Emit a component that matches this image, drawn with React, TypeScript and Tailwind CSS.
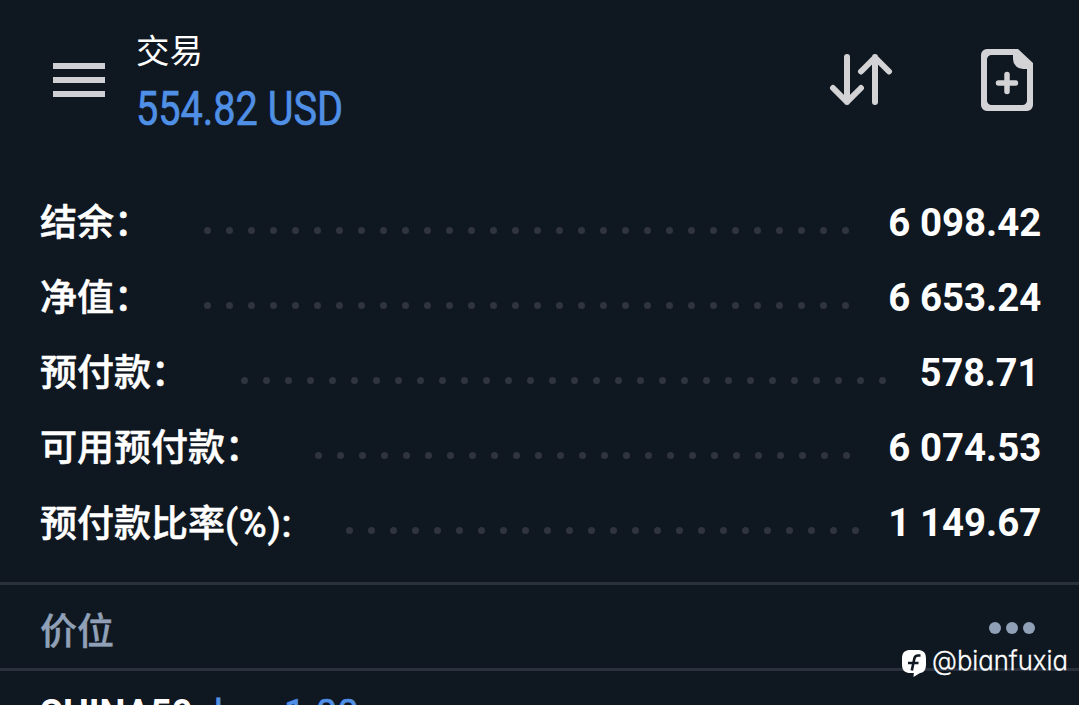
interface SummaryRow {
  label: string
  suffix?: string
  labelClass: string
  dots: number
  value: string
  valueClass?: string
}

const summaryRows: SummaryRow[] = [
  { label: '结余：', labelClass: 'w-[164px]', dots: 30, value: '6 098.42' },
  { label: '净值：', labelClass: 'w-[164px]', dots: 30, value: '6 653.24' },
  { label: '预付款：', labelClass: 'w-[201px]', dots: 30, value: '578.71', valueClass: 'pr-[2px] scale-x-[0.97]' },
  { label: '可用预付款：', labelClass: 'w-[275px]', dots: 25, value: '6 074.53' },
  { label: '预付款比率', suffix: '(%):', labelClass: 'w-[306px]', dots: 24, value: '1 149.67' },
]

function MenuIcon() {
  return (
    <svg width="52" height="36" viewBox="0 0 52 36" fill="#d0d0d4" aria-hidden="true">
      <rect y="0" width="52" height="6" />
      <rect y="14" width="52" height="6" />
      <rect y="28" width="52" height="6" />
    </svg>
  )
}

function SortIcon() {
  return (
    <svg
      width="64"
      height="54"
      viewBox="0 0 64 54"
      fill="none"
      stroke="#d3d3d5"
      strokeWidth="6"
      strokeLinecap="round"
      strokeLinejoin="round"
      aria-hidden="true"
    >
      <path d="M18 4v45M4 35l14 14 14-14" />
      <path d="M46 49V4M32 18.500l14-14 14 14" />
    </svg>
  )
}

function NewOrderIcon() {
  return (
    <svg width="52" height="64" viewBox="0 0 52 64" aria-hidden="true">
      <path
        fill="#d3d3d5"
        fillRule="evenodd"
        d="M6 1H37L52 15V57a6 6 0 0 1-6 6H6a6 6 0 0 1-6-6V7a6 6 0 0 1 6-6ZM10.500 7A4.500 4.500 0 0 0 6 11.500V52.500A4.500 4.500 0 0 0 10.500 57H41.500A4.500 4.500 0 0 0 46 52.500V21H42A10 10 0 0 1 32 11V7Z"
      />
      <path d="M26 26.500v17M17.500 35h17" fill="none" stroke="#d3d3d5" strokeWidth="5.500" strokeLinecap="round" />
    </svg>
  )
}

function Watermark() {
  return (
    <div className="absolute top-[646px] left-[902px] flex items-start">
      <svg width="24" height="32" viewBox="0 0 24 32" aria-hidden="true">
        <path
          fill="#fff"
          d="M9 4h6c6.500 0 9 2.500 9 9v5c0 6-2 8.500-6 9l-6.500 4 .3-4H9c-6.500 0-9-2.500-9-9v-5c0-6.500 2.500-9 9-9Z"
        />
        <path
          d="M18.500 9.500h-2.500c-2.200 0-3.200 1-3.700 3.200L9.800 24.500M6 17h10.500"
          fill="none"
          stroke="#0f1720"
          strokeWidth="2.600"
        />
      </svg>
      <span className="ml-[6px] origin-left scale-x-[0.95] font-[Inter,sans-serif] text-[27px] leading-[30px] font-light whitespace-nowrap text-white [-webkit-text-stroke:0.3px] [font-feature-settings:'cv11']">
        @bianfuxia
      </span>
    </div>
  )
}

export default function App() {
  return (
    <main className="relative flex h-[705px] w-[1079px] flex-col overflow-hidden bg-[#0f1720] font-[Roboto,'Noto_Sans_CJK_SC',sans-serif] text-white">
      <header className="flex h-[185px] shrink-0 items-start pr-[46px] pl-[53px]">
        <div className="pt-[63px]">
          <MenuIcon />
        </div>
        <div className="ml-[31px] flex flex-1 flex-col pt-[32px]">
          <span className="text-[33.500px] leading-[40px]">交易</span>
          <span className="mt-[12px] inline-block w-max origin-left scale-x-[0.835] text-[47.500px] leading-[50px] text-[#4f90e6] [-webkit-text-stroke:0.7px]">
            554.82 USD
          </span>
        </div>
        <div className="pt-[53px]">
          <SortIcon />
        </div>
        <div className="ml-[88px] pt-[48px]">
          <NewOrderIcon />
        </div>
      </header>

      <section className="flex h-[397px] shrink-0 flex-col pr-[38px] pl-[40px]">
        {summaryRows.map((row) => (
          <div key={row.label} className="flex h-[75px] shrink-0 items-center">
            <span
              className={`${row.labelClass} shrink-0 pt-[3px] text-[37px] leading-[50px] font-medium whitespace-nowrap [-webkit-text-stroke:0.5px]`}
            >
              {row.label}
              {row.suffix && <span className="text-[38px] tracking-[0.7px]">{row.suffix}</span>}
            </span>
            <div className="flex gap-[15px] pt-[16px]" aria-hidden="true">
              {Array.from({ length: row.dots }, (_, i) => (
                <i key={i} className="size-[7px] rounded-full bg-[#30343f]" />
              ))}
            </div>
            <span
              className={`ml-auto origin-right text-[39px] leading-[50px] font-bold whitespace-nowrap ${row.valueClass ?? 'scale-x-[0.985]'}`}
            >
              {row.value}
            </span>
          </div>
        ))}
      </section>

      <section className="flex h-[89px] shrink-0 items-center justify-between border-y-[3px] border-[#2b303d] pr-[44px] pl-[40px] text-[#8fa0b7]">
        <h2 className="pt-[12px] text-[37px] leading-[50px] font-medium [-webkit-text-stroke:0.4px]">价位</h2>
        <div className="flex gap-[5px] pt-[2px]">
          <i className="size-[12px] rounded-full bg-current" />
          <i className="size-[12px] rounded-full bg-current" />
          <i className="size-[12px] rounded-full bg-current" />
        </div>
      </section>

      <section className="flex shrink-0 items-start pt-[18px] pl-[39px] text-[39px] leading-[50px]">
        <span className="w-[175px] shrink-0">
          <span className="inline-block origin-left scale-x-[0.94] font-bold">CHINA50</span>
        </span>
        <span className="origin-left scale-x-[0.98] whitespace-nowrap text-[#4f90e6] [-webkit-text-stroke:0.6px]">
          buy 1.00
        </span>
      </section>

      <Watermark />
    </main>
  )
}
